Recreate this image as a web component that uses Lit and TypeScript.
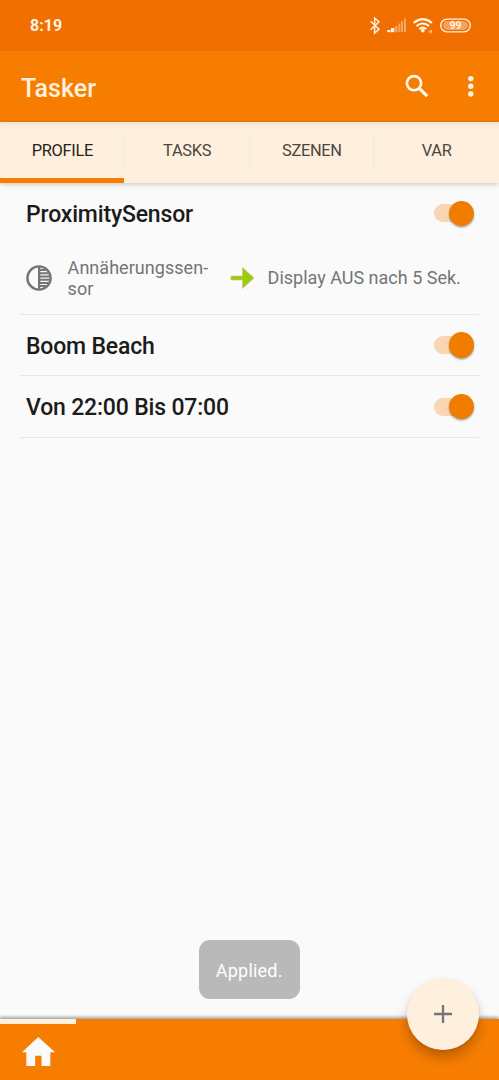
import { LitElement, html, css, nothing } from "lit";
import { customElement, property } from "lit/decorators.js";

@customElement("status-bar")
class StatusBar extends LitElement {
  static styles = css`
    :host { display: flex; align-items: center; height: 51px; background: #f06f00; color: #fff3e2; padding: 0 28px 0 30px; box-sizing: border-box; }
    .time { font-size: 16px; font-weight: 700; flex: 1; letter-spacing: 0.05px; line-height: 20px; padding-top: 1px; }
    svg { display: block; }
  `;
  render() {
    return html`
      <span class="time">8:19</span>
      <svg width="102" height="20" viewBox="369 16 102 20" fill="none" stroke="#fff3e2">
        <path d="M370.6 21.2l8.4 8-4.4 3.9V18.1l4.4 3.7-8.4 8" stroke-width="1.5" />
        <g stroke="none" fill="#fff3e2">
          <rect x="387.2" y="30" width="3.2" height="2.2" />
          <rect x="390.9" y="28" width="3.4" height="4.2" />
          <g opacity=".42">
            <rect x="395" y="26" width="2.4" height="6.2" />
            <rect x="398.3" y="23.5" width="2" height="8.7" />
            <rect x="401" y="21" width="2" height="11.2" />
            <rect x="404" y="18.6" width="2" height="13.6" />
          </g>
          <circle cx="422.8" cy="30.6" r="1.9" />
          <path d="M428.8 30.4h1v2h-1zM430.6 30h1.3v2l-.8 1.8h-.7z" opacity=".75" />
        </g>
        <g stroke-width="2.1">
          <path d="M413.6 22.9q9.2-7.6 18.4 0" />
          <path d="M416.5 26.1q6.3-5.2 12.6 0" />
          <path d="M419.3 29q3.5-2.8 7 0" />
        </g>
        <rect x="440.7" y="19.1" width="29.6" height="12.8" rx="6.4" stroke-width="1.4" />
        <rect x="442.9" y="21.1" width="25.2" height="8.8" rx="4.4" fill="#f6a058" stroke="none" />
        <text x="455.5" y="29.2" text-anchor="middle" font-size="10.5" font-weight="700" fill="#fff3e2" stroke="none">99</text>
      </svg>
    `;
  }
}

@customElement("toggle-switch")
class ToggleSwitch extends LitElement {
  static styles = css`
    :host { display: flex; width: 41px; height: 26px; align-items: center; }
    .track { display: flex; align-items: center; justify-content: flex-end; width: 38px; height: 18px; border-radius: 9px; background: #f8d5b3; }
    .thumb { flex: none; width: 25.4px; height: 25.4px; border-radius: 50%; background: #f07c00; margin-right: -2.2px; box-shadow: 0 1.5px 2px rgba(0, 0, 0, 0.35); }
  `;
  render() {
    return html`<div class="track"><div class="thumb"></div></div>`;
  }
}

@customElement("profile-row")
class ProfileRow extends LitElement {
  @property() name = "";
  @property({ attribute: false }) rule?: { context: string[]; task: string };

  static styles = css`
    :host { display: block; margin: 0 20.5px 0 20px; border-bottom: 1px solid #e6e6e6; }
    .head { display: flex; align-items: center; justify-content: space-between; height: 60.4px; padding: 0 3.8px 0 6px; }
    .name { font-size: 23px; font-weight: 500; letter-spacing: -0.18px; color: #1b1b1b; line-height: 28px; padding-top: 3px; }
    .rule { display: flex; align-items: center; height: 70.6px; padding: 0 0 1.6px 6px; font-size: 18px; line-height: 21px; color: #757575; white-space: nowrap; box-sizing: border-box; }
    .context { width: 162px; margin-left: 15.6px; letter-spacing: 0.04px; }
    .task { margin-left: 13px; letter-spacing: 0; }
    svg { display: block; flex: none; }
  `;
  render() {
    return html`
      <div class="head"><span class="name">${this.name}</span><toggle-switch></toggle-switch></div>
      ${this.rule
        ? html`<div class="rule">
            <svg width="26" height="26" viewBox="0 0 26 26">
              <circle cx="13" cy="13" r="11.6" fill="none" stroke="#757575" stroke-width="2.4" />
              <path d="M12 1h2.3v24H12z" fill="#757575" />
              <path d="M13 5h7.5M13 8.3h10M13 11.5h11M13 14.7h11M13 17.9h10M13 21.1h7" stroke="#757575" stroke-width="2" />
            </svg>
            <div class="context">${this.rule.context.map((t) => html`<div>${t}</div>`)}</div>
            <svg width="25" height="24" viewBox="0 0 25 24">
              <path d="M1 10h11.5V1.4L24 12 12.5 22.6V14H1z" fill="#99cc0a" stroke="#d9c27c" stroke-width=".6" />
            </svg>
            <span class="task">${this.rule.task}</span>
          </div>`
        : nothing}
    `;
  }
}

@customElement("app-root")
class AppRoot extends LitElement {
  static styles = css`
    :host { display: flex; flex-direction: column; position: relative; height: 1080px; overflow: hidden; background: #fafafa; font-family: Roboto, sans-serif; }
    svg { display: block; }
    .bar { display: flex; align-items: center; height: 71px; box-sizing: border-box; padding: 0 20px 0 21px; background: #f77d00; color: #fff1df; }
    .title { flex: 1; font-size: 25px; font-weight: 500; line-height: 30px; padding-top: 4px; }
    .bar svg { margin-top: -1px; }
    .tabs { display: grid; grid-template-columns: repeat(4, 1fr); height: 61px; background: linear-gradient(#f1e2d0, #ffefdd 5px, #fff0de); box-shadow: 0 1px 5px rgba(0, 0, 0, 0.22); }
    .tab { display: flex; align-items: center; justify-content: center; box-sizing: border-box; padding-bottom: 4px; font-size: 16.4px; letter-spacing: -0.3px; color: #4b4641; background: linear-gradient(#f5e7d6, #f5e7d6) right 12px / 1px 36px no-repeat; }
    .tab:last-child { background: none; }
    .tab.on { color: #242321; background: linear-gradient(#f77d00, #f77d00) left bottom / 124px 5px no-repeat, linear-gradient(#f5e7d6, #f5e7d6) right 12px / 1px 36px no-repeat; }
    .list { flex: 1; }
    .bottom { height: 61px; background: #f77d00; box-shadow: 0 -2px 3px rgba(0, 0, 0, 0.35); }
    .mark { width: 76px; height: 5px; background: #fff0de; }
    .home { margin: 13px 0 0 22px; }
    .toast { position: absolute; left: 198.5px; top: 939.5px; width: 101.5px; height: 59px; border-radius: 11px; background: #b9b9b9; color: #fff; font-size: 18px; letter-spacing: 0.2px; display: flex; align-items: center; justify-content: center; padding-top: 2px; box-sizing: border-box; }
    .fab { position: absolute; left: 407.3px; top: 978px; width: 71.5px; height: 71.5px; border-radius: 50%; background: #fff0de; display: flex; align-items: center; justify-content: center; box-shadow: 0 8px 12px rgba(0, 0, 0, 0.23), 0 1px 3px rgba(0, 0, 0, 0.08); }
  `;
  render() {
    const tabs = ["PROFILE", "TASKS", "SZENEN", "VAR"];
    return html`
      <status-bar></status-bar>
      <header class="bar">
        <span class="title">Tasker</span>
        <svg width="78" height="26" viewBox="401 73 78 26">
          <circle cx="414" cy="83.2" r="7.1" fill="none" stroke="#fff8ef" stroke-width="2.6" />
          <path d="M419 88.2l8.2 8" stroke="#fff8ef" stroke-width="3.2" />
          <g fill="#fff3e4"><circle cx="470.8" cy="78.6" r="2.7" /><circle cx="470.8" cy="86.3" r="2.7" /><circle cx="470.8" cy="94" r="2.7" /></g>
        </svg>
      </header>
      <nav class="tabs">${tabs.map((t, i) => html`<div class="tab ${i === 0 ? "on" : ""}">${t}</div>`)}</nav>
      <main class="list">
        <profile-row name="ProximitySensor" .rule=${{ context: ["Annäherungssen-", "sor"], task: "Display AUS nach 5 Sek." }}></profile-row>
        <profile-row name="Boom Beach"></profile-row>
        <profile-row name="Von 22:00 Bis 07:00"></profile-row>
      </main>
      <footer class="bottom">
        <div class="mark"></div>
        <svg class="home" width="33" height="29" viewBox="0 0 33 29"><path d="M16.3 0L33 15.2h-4.7V29h-8.8V18.7h-6.3V29H4.3V15.2H0z" fill="#fafafa" /></svg>
      </footer>
      <div class="toast">Applied.</div>
      <div class="fab"><svg width="18" height="18" viewBox="0 0 18 18"><path d="M9 0v18M0 9h18" stroke="#757575" stroke-width="2.3" /></svg></div>
    `;
  }
}
